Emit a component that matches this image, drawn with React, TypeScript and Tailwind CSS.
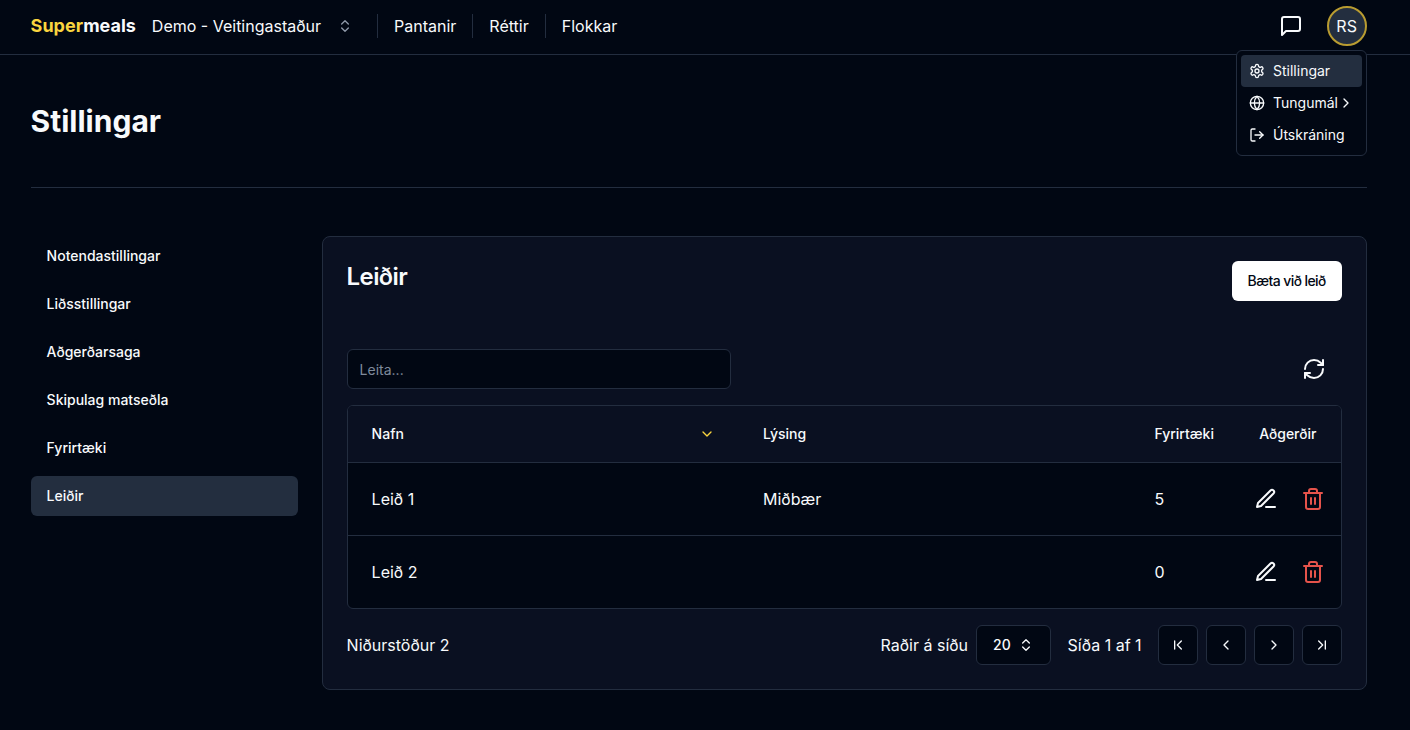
import React from "react";
import { Globe, LogOut, RefreshCw, ChevronRight, ChevronLeft, ChevronDown, ChevronFirst, ChevronLast, ChevronsUpDown } from "lucide-react";

function Glyph({ size = 24, className, children }: { size?: number; className?: string; children: React.ReactNode }) {
  return (
    <svg width={size} height={size} viewBox="0 0 24 24" fill="none" stroke="currentColor" strokeWidth="2" strokeLinecap="round" strokeLinejoin="round" className={className}>
      {children}
    </svg>
  );
}

function PenLine() {
  return (
    <Glyph>
      <path d="M12 20h9" />
      <path d="M16.5 3.5a2.12 2.12 0 0 1 3 3L7 19l-4 1 1-4Z" />
    </Glyph>
  );
}

function Trash() {
  return (
    <Glyph className="text-[#e5534b]">
      <path d="M3 6h18" />
      <path d="M19 6v14c0 1-1 2-2 2H7c-1 0-2-1-2-2V6" />
      <path d="M8 6V4c0-1 1-2 2-2h4c1 0 2 1 2 2v2" />
      <path d="M10 11v6M14 11v6" />
    </Glyph>
  );
}

function Message() {
  return (
    <Glyph>
      <path d="M21 15a2 2 0 0 1-2 2H7l-4 4V5a2 2 0 0 1 2-2h14a2 2 0 0 1 2 2z" />
    </Glyph>
  );
}

function Gear() {
  return (
    <Glyph size={16}>
      <path d="M12.22 2h-.44a2 2 0 0 0-2 2v.18a2 2 0 0 1-1 1.73l-.43.25a2 2 0 0 1-2 0l-.15-.08a2 2 0 0 0-2.73.73l-.22.38a2 2 0 0 0 .73 2.73l.15.1a2 2 0 0 1 1 1.72v.51a2 2 0 0 1-1 1.74l-.15.09a2 2 0 0 0-.73 2.73l.22.38a2 2 0 0 0 2.73.73l.15-.08a2 2 0 0 1 2 0l.43.25a2 2 0 0 1 1 1.73V20a2 2 0 0 0 2 2h.44a2 2 0 0 0 2-2v-.18a2 2 0 0 1 1-1.73l.43-.25a2 2 0 0 1 2 0l.15.08a2 2 0 0 0 2.73-.73l.22-.39a2 2 0 0 0-.73-2.73l-.15-.08a2 2 0 0 1-1-1.74v-.5a2 2 0 0 1 1-1.74l.15-.09a2 2 0 0 0 .73-2.73l-.22-.38a2 2 0 0 0-2.73-.73l-.15.08a2 2 0 0 1-2 0l-.43-.25a2 2 0 0 1-1-1.73V4a2 2 0 0 0-2-2z" />
      <circle cx="12" cy="12" r="3" />
    </Glyph>
  );
}

const navItems = ["Pantanir", "Réttir", "Flokkar"];
const sideItems = ["Notendastillingar", "Liðsstillingar", "Aðgerðarsaga", "Skipulag matseðla", "Fyrirtæki", "Leiðir"];
const rows = [
  { name: "Leið 1", description: "Miðbær", companies: 5 },
  { name: "Leið 2", description: "", companies: 0 },
];
const pagers = [ChevronFirst, ChevronLeft, ChevronRight, ChevronLast];
const columns = "grid grid-cols-[391.4px_391.4px_104.8px_1fr] items-center";

export default function App() {
  return (
    <div className="h-[730px] overflow-hidden bg-[#010713] font-['Inter',sans-serif] text-base text-[#f8fafc] antialiased">
      <header className="flex h-[55px] items-center border-b border-[#232d3f] pr-[43.4px] pb-0.5 pl-[30.6px]">
        <div className="text-lg font-bold"><span className="text-[#fad53f]">Super</span>meals</div>
        <button className="ml-4 flex items-center gap-4">
          Demo - Veitingastaður
          <ChevronsUpDown size={16} className="text-[#8e98a8]" />
        </button>
        <nav className="ml-6 flex">
          {navItems.map((item) => (
            <a key={item} className="border-l border-[#232d3f] px-4">{item}</a>
          ))}
        </nav>
        <div className="relative ml-auto flex items-center gap-6">
          <Message />
          <div className="flex size-10 items-center justify-center rounded-full border-2 border-[#b99c31] bg-[#232e3f]">RS</div>
          <div className="absolute top-11 -right-[0.4px] z-10 w-[131px] rounded-md border border-[#232d3f] bg-[#010713] p-1 text-sm">
            <div className="flex h-8 items-center gap-2 rounded-sm bg-[#232e3f] px-2"><Gear />Stillingar</div>
            <div className="flex h-8 items-center px-2"><Globe size={16} className="mr-2" />Tungumál<ChevronRight size={16} /></div>
            <div className="flex h-8 items-center gap-2 px-2"><LogOut size={16} />Útskráning</div>
          </div>
        </div>
      </header>
      <main className="pr-[43.4px] pl-[30.6px]">
        <div className="h-[133px] border-b border-[#232d3f] pt-12">
          <h1 className="text-3xl font-bold">Stillingar</h1>
        </div>
        <div className="mt-12 flex gap-6">
          <aside className="flex w-[267px] shrink-0 flex-col gap-2 text-sm font-medium">
            {sideItems.map((item) => (
              <a key={item} className={item === "Leiðir" ? "flex h-10 items-center rounded-md bg-[#232e3f] px-4" : "flex h-10 items-center px-4"}>{item}</a>
            ))}
          </aside>
          <section className="h-[454px] min-w-0 flex-1 rounded-lg border border-[#232d3f] bg-[#0a1021] p-6">
            <div className="flex items-start justify-between">
              <h2 className="text-2xl font-semibold tracking-tight">Leiðir</h2>
              <button className="h-10 w-[110px] rounded-md bg-white text-sm font-medium tracking-[-0.58px] text-[#010713]">Bæta við leið</button>
            </div>
            <div className="mt-12 flex items-center justify-between">
              <div className="flex h-10 w-96 items-center rounded-md border border-[#232d3f] bg-[#010713] px-3 pt-0.5 text-sm text-[#7f8a9b]">Leita...</div>
              <RefreshCw size={24} className="mr-4" />
            </div>
            <div className="mt-4 overflow-hidden rounded-md border border-[#232d3f] bg-[#010713]">
              <div className={`${columns} h-14 bg-[#0a1021] pl-6 text-sm font-medium`}>
                <div className="flex items-center justify-between pr-12">Nafn<ChevronDown size={16} className="text-[#fad53f]" /></div>
                <div>Lýsing</div>
                <div>Fyrirtæki</div>
                <div>Aðgerðir</div>
              </div>
              {rows.map((row) => (
                <div key={row.name} className={`${columns} h-[73px] border-t border-[#232d3f] pl-6`}>
                  <div>{row.name}</div>
                  <div>{row.description}</div>
                  <div>{row.companies}</div>
                  <div className="-ml-[5px] flex items-center gap-[23px]">
                    <PenLine />
                    <Trash />
                  </div>
                </div>
              ))}
            </div>
            <div className="mt-4 flex items-center justify-between">
              <div>Niðurstöður 2</div>
              <div className="flex items-center">
                <span>Raðir á síðu</span>
                <button className="ml-2 flex h-10 w-[75px] items-center gap-[7px] rounded-md border border-[#232d3f] bg-[#010713] pl-4 text-sm font-medium">20<ChevronsUpDown size={16} /></button>
                <span className="mr-4 ml-[16.5px]">Síða 1 af 1</span>
                <div className="flex gap-2">
                  {pagers.map((Icon, i) => (
                    <button key={i} className="flex size-10 items-center justify-center rounded-md border border-[#232d3f] bg-[#010713]"><Icon size={16} /></button>
                  ))}
                </div>
              </div>
            </div>
          </section>
        </div>
      </main>
    </div>
  );
}
